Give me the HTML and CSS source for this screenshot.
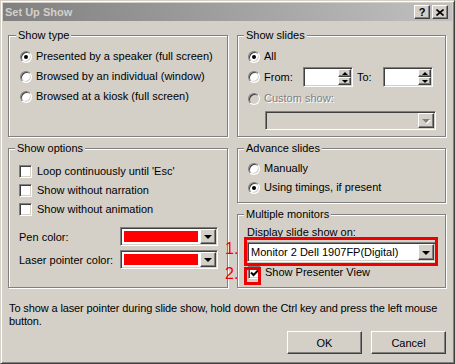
FILE: index.html
```html
<!DOCTYPE html>
<html lang="en">
<head>
<meta charset="utf-8">
<title>Set Up Show</title>
<link rel="stylesheet" href="styles.css">
</head>
<body>
<div class="window">
    <div class="titlebar">
        <span class="title">Set Up Show</span>
        <div class="caption-buttons">
            <span class="cap-btn">?</span>
            <span class="cap-btn"><svg width="8" height="7" viewBox="0 0 8 7"><path d="M0.5 0.5 L7.5 6.5 M7.5 0.5 L0.5 6.5" stroke="#000" stroke-width="1.6"/></svg></span>
        </div>
    </div>
    <div class="main">
        <div class="groups">
            <fieldset class="group show-type">
                <legend>Show type</legend>
                <div class="rows">
                    <div class="option"><span class="radio checked"></span>Presented by a speaker (full screen)</div>
                    <div class="option"><span class="radio"></span>Browsed by an individual (window)</div>
                    <div class="option"><span class="radio"></span>Browsed at a kiosk (full screen)</div>
                </div>
            </fieldset>
            <fieldset class="group show-slides">
                <legend>Show slides</legend>
                <div class="rows">
                    <div class="option"><span class="radio checked"></span>All</div>
                    <div class="option range">
                        <span class="radio"></span><span class="from">From:</span>
                        <span class="spin"><span class="spin-btns"><span class="spin-btn"><i class="up"></i></span><span class="spin-btn"><i class="down"></i></span></span></span>
                        <span class="to">To:</span>
                        <span class="spin"><span class="spin-btns"><span class="spin-btn"><i class="up"></i></span><span class="spin-btn"><i class="down"></i></span></span></span>
                    </div>
                    <div class="option disabled"><span class="radio"></span>Custom show:</div>
                    <div class="combo custom disabled"><span class="value"></span><span class="drop"><i></i></span></div>
                </div>
            </fieldset>
            <fieldset class="group show-options">
                <legend>Show options</legend>
                <div class="rows">
                    <div class="option"><span class="check"></span>Loop continuously until 'Esc'</div>
                    <div class="option"><span class="check"></span>Show without narration</div>
                    <div class="option"><span class="check"></span>Show without animation</div>
                </div>
                <div class="color-row pen">
                    <span>Pen color:</span>
                    <div class="combo color"><span class="value"><span class="swatch"></span></span><span class="drop"><i></i></span></div>
                </div>
                <div class="color-row laser">
                    <span>Laser pointer color:</span>
                    <div class="combo color"><span class="value"><span class="swatch"></span></span><span class="drop"><i></i></span></div>
                </div>
            </fieldset>
            <fieldset class="group advance">
                <legend>Advance slides</legend>
                <div class="rows">
                    <div class="option"><span class="radio"></span>Manually</div>
                    <div class="option"><span class="radio checked"></span>Using timings, if present</div>
                </div>
            </fieldset>
            <fieldset class="group monitors">
                <legend>Multiple monitors</legend>
                <div class="display-label">Display slide show on:</div>
                <div class="combo monitor"><span class="value">Monitor 2 Dell 1907FP(Digital)</span><span class="drop"><i></i></span></div>
                <div class="option presenter"><span class="check checked"><svg width="9" height="8" viewBox="0 0 9 8"><path d="M1 3.5 L3.5 6 L8 1.5" fill="none" stroke="#000" stroke-width="2"/></svg></span>Show Presenter View</div>
            </fieldset>
        </div>
        <p class="hint">To show a laser pointer during slide show, hold down the Ctrl key and press the left mouse<br>button.</p>
        <div class="buttons">
            <span class="btn">OK</span>
            <span class="btn">Cancel</span>
        </div>
    </div>
    <!-- annotations drawn over the dialog -->
    <span class="mark mark-combo"></span>
    <span class="mark mark-check"></span>
    <span class="step step-1">1.</span>
    <span class="step step-2">2.</span>
</div>
</body>
</html>
```

FILE: styles.css
```css
body {
    margin: 0;
    background: #d4d0c8;
    font-family: "Liberation Sans", Arial, sans-serif;
    font-size: 11px;
    color: #000;
}
.window {
    position: relative;
    width: 455px;
    height: 364px;
    box-sizing: border-box;
    padding: 2px;
    border: 1px solid;
    border-color: #d4d0c8 #404040 #404040 #d4d0c8;
    box-shadow: inset 1px 1px 0 #fff, inset -1px -1px 0 #808080;
}
.titlebar {
    height: 18px;
    display: flex;
    align-items: center;
    justify-content: space-between;
    padding: 0 4px 0 2px;
    background: linear-gradient(to right, #808080, #c0c0c0);
}
.title {
    color: #d4d0c8;
    font-weight: bold;
    font-size: 11px;
}
.caption-buttons {
    display: flex;
    gap: 2px;
}
.cap-btn {
    width: 16px;
    height: 14px;
    box-sizing: border-box;
    display: flex;
    align-items: center;
    justify-content: center;
    background: #d4d0c8;
    border: 1px solid;
    border-color: #fff #404040 #404040 #fff;
    box-shadow: inset -1px -1px 0 #808080;
    font-weight: bold;
    font-size: 11px;
    line-height: 1;
}
.main {
    padding: 8px 6px 0 5px;
}
.groups {
    display: grid;
    grid-template-columns: 220px 209px;
    grid-template-rows: 108px 61px 80px;
    column-gap: 9px;
    row-gap: 5px;
}
.group {
    margin: 0;
    padding: 0 9px 0 10px;
    min-width: 0;
    border: 1px solid #808080;
    box-shadow: inset 1px 1px 0 #fff, 1px 1px 0 #fff;
}
.group legend {
    padding: 0 2px;
    margin-left: -4px;
    line-height: 13px;
    background: #d4d0c8;
}
.show-options {
    grid-row: 2 / 4;
}
.rows {
    display: flex;
    flex-direction: column;
}
.option {
    display: flex;
    align-items: center;
    height: 13px;
    line-height: 13px;
    white-space: nowrap;
}
.radio {
    flex: none;
    position: relative;
    width: 12px;
    height: 12px;
    box-sizing: border-box;
    margin-right: 4px;
    border-radius: 50%;
    border: 1px solid;
    border-color: #808080 #fff #fff #808080;
    box-shadow: inset 1px 1px 0 #404040, inset -1px -1px 0 #d4d0c8;
    background: #fff;
}
.radio.checked::after {
    content: "";
    position: absolute;
    left: 3px;
    top: 3px;
    width: 4px;
    height: 4px;
    border-radius: 50%;
    background: #000;
}
.check {
    flex: none;
    display: flex;
    align-items: center;
    justify-content: center;
    width: 13px;
    height: 13px;
    box-sizing: border-box;
    margin-right: 5px;
    border: 1px solid;
    border-color: #808080 #fff #fff #808080;
    box-shadow: inset 1px 1px 0 #404040, inset -1px -1px 0 #d4d0c8;
    background: #fff;
}
.disabled {
    color: #808080;
    text-shadow: 1px 1px 0 #fff;
}
.option.disabled .radio {
    background: #d4d0c8;
}

/* show type */
.show-type {
    padding-left: 11px;
}
.show-type .rows {
    padding-top: 8px;
    gap: 7px;
}

/* show slides */
.show-slides .rows {
    padding-top: 8px;
}
.show-slides .range {
    height: 20px;
    margin-top: 4px;
}
.show-slides .option.disabled {
    margin-top: 5px;
}
.from {
    width: 39px;
}
.to {
    width: 26px;
    margin-left: 4px;
}
.spin {
    display: flex;
    justify-content: flex-end;
    width: 50px;
    height: 20px;
    box-sizing: border-box;
    padding: 1px;
    border: 1px solid;
    border-color: #808080 #fff #fff #808080;
    box-shadow: inset 1px 1px 0 #404040, inset -1px -1px 0 #d4d0c8;
    background: #fff;
}
.spin-btns {
    display: flex;
    flex-direction: column;
    width: 13px;
}
.spin-btn {
    flex: 1;
    display: flex;
    align-items: center;
    justify-content: center;
    box-sizing: border-box;
    background: #d4d0c8;
    border: 1px solid;
    border-color: #fff #404040 #404040 #fff;
    box-shadow: inset -1px -1px 0 #808080;
}
.spin-btn i {
    width: 0;
    height: 0;
    border-left: 3px solid transparent;
    border-right: 3px solid transparent;
}
.spin-btn .up {
    border-bottom: 3px solid #000;
}
.spin-btn .down {
    border-top: 3px solid #000;
}

/* drop-down boxes */
.combo {
    display: flex;
    height: 20px;
    box-sizing: border-box;
    padding: 1px;
    border: 1px solid;
    border-color: #808080 #fff #fff #808080;
    box-shadow: inset 1px 1px 0 #404040, inset -1px -1px 0 #d4d0c8;
    background: #fff;
}
.combo .value {
    flex: 1;
    display: flex;
    align-items: center;
    padding-left: 2px;
    line-height: 14px;
    white-space: nowrap;
}
.drop {
    flex: none;
    display: flex;
    align-items: center;
    justify-content: center;
    width: 16px;
    box-sizing: border-box;
    background: #d4d0c8;
    border: 1px solid;
    border-color: #fff #404040 #404040 #fff;
    box-shadow: inset -1px -1px 0 #808080;
}
.drop i {
    width: 0;
    height: 0;
    margin-top: 1px;
    border-top: 4px solid #000;
    border-left: 4px solid transparent;
    border-right: 4px solid transparent;
}
.combo.disabled {
    background: #d4d0c8;
}
.combo.disabled .drop i {
    border-top-color: #808080;
    filter: drop-shadow(1px 1px 0 #fff);
}
.custom {
    width: 171px;
    height: 19px;
    margin: 6px 0 0 17px;
}

/* show options */
.show-options .rows {
    padding-top: 10px;
    gap: 6px;
}
.color-row {
    display: flex;
    align-items: center;
    justify-content: space-between;
}
.color-row.pen {
    margin-top: 11px;
}
.color-row.laser {
    margin-top: 4px;
}
.combo.color {
    width: 98px;
    height: 19px;
}
.combo.color .value {
    padding: 2px;
}
.swatch {
    flex: 1;
    align-self: stretch;
    background: #ff0000;
}

/* advance slides */
.advance .rows {
    padding-top: 7px;
    gap: 6px;
}

/* multiple monitors */
.display-label {
    margin-top: 5px;
    margin-left: -1px;
    line-height: 13px;
}
.combo.monitor {
    margin-top: 3px;
    margin-left: -1px;
}
.presenter {
    margin-top: 4px;
}
.presenter .check {
    margin-right: 4px;
}

.hint {
    margin: 14px -6px 0 1px;
    line-height: 13px;
    letter-spacing: -0.12px;
    white-space: nowrap;
}
.buttons {
    display: flex;
    justify-content: flex-end;
    gap: 9px;
    margin-top: 3px;
}
.btn {
    display: flex;
    align-items: center;
    justify-content: center;
    width: 75px;
    height: 23px;
    box-sizing: border-box;
    border: 1px solid;
    border-color: #fff #404040 #404040 #fff;
    box-shadow: inset -1px -1px 0 #808080;
}

/* red annotations */
.mark {
    position: absolute;
    box-sizing: border-box;
    border: 3px solid #ee0000;
}
.mark-combo {
    left: 243px;
    top: 236px;
    width: 194px;
    height: 29px;
}
.mark-check {
    left: 243px;
    top: 266px;
    width: 17px;
    height: 18px;
}
.step {
    position: absolute;
    color: #ee0000;
    font-size: 16px;
    line-height: 16px;
}
.step-1 {
    left: 224px;
    top: 240px;
}
.step-2 {
    left: 224px;
    top: 265px;
}
```
